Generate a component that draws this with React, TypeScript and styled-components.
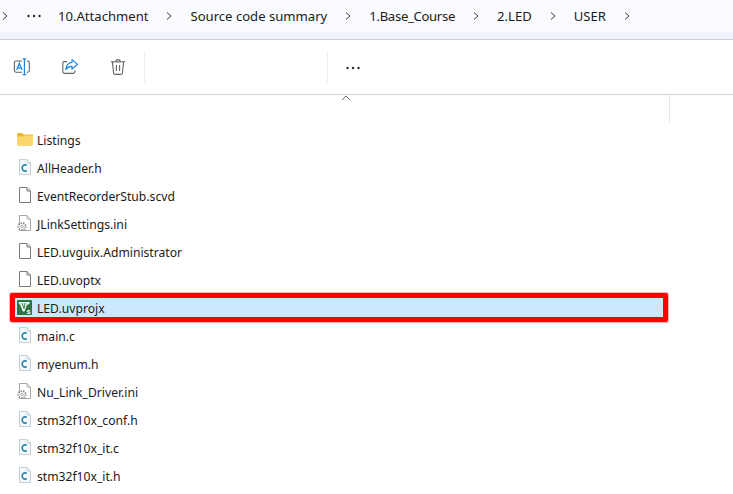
import { FC } from 'react';
import styled, { createGlobalStyle } from 'styled-components';

type Kind = 'folder' | 'c' | 'blank' | 'ini' | 'keil';

interface FileEntry {
  name: string;
  kind: Kind;
  selected?: boolean;
}

const crumbs = [
  { label: '10.Attachment' },
  { label: 'Source code summary' },
  { label: '1.Base_Course', tight: true },
  { label: '2.LED' },
  { label: 'USER' },
];

const files: FileEntry[] = [
  { name: 'Listings', kind: 'folder' },
  { name: 'AllHeader.h', kind: 'c' },
  { name: 'EventRecorderStub.scvd', kind: 'blank' },
  { name: 'JLinkSettings.ini', kind: 'ini' },
  { name: 'LED.uvguix.Administrator', kind: 'blank' },
  { name: 'LED.uvoptx', kind: 'blank' },
  { name: 'LED.uvprojx', kind: 'keil', selected: true },
  { name: 'main.c', kind: 'c' },
  { name: 'myenum.h', kind: 'c' },
  { name: 'Nu_Link_Driver.ini', kind: 'ini' },
  { name: 'stm32f10x_conf.h', kind: 'c' },
  { name: 'stm32f10x_it.c', kind: 'c' },
  { name: 'stm32f10x_it.h', kind: 'c' },
];

const Chevron = () => (
  <svg width="10" height="10" viewBox="0 0 10 10" fill="none" stroke="#3c3c3c" strokeWidth="1">
    <path d="M3 1.5 L7 5 L3 8.5" />
  </svg>
);

const Dots = () => (
  <svg width="16" height="4" viewBox="0 0 16 4" fill="#2b2b2b">
    <circle cx="2.5" cy="2" r="1.2" />
    <circle cx="8" cy="2" r="1.2" />
    <circle cx="13.5" cy="2" r="1.2" />
  </svg>
);

const RenameIcon = () => (
  <svg width="18" height="18" viewBox="0 0 18 18" fill="none">
    <path d="M9 3 H3 a1.6 1.6 0 0 0 -1.6 1.6 v8 a1.6 1.6 0 0 0 1.6 1.6 H9" stroke="#5f6368" strokeWidth="1.1" />
    <path d="M13.5 3 h1.2 a1.6 1.6 0 0 1 1.6 1.6 v8 a1.6 1.6 0 0 1 -1.6 1.6 h-1.2" stroke="#5f6368" strokeWidth="1.1" />
    <path d="M9.6 0.8 h3.6 M11.4 0.8 V16.6 M9.6 16.6 h3.6" stroke="#1a86e0" strokeWidth="1.2" />
    <path d="M3.6 12 L6.3 5.2 L9 12 M4.6 9.8 H8" stroke="#1a86e0" strokeWidth="1.2" />
  </svg>
);

const ShareIcon = () => (
  <svg width="18" height="18" viewBox="0 0 18 18" fill="none">
    <path d="M6 3.6 H3.4 a1.6 1.6 0 0 0 -1.6 1.6 v8.6 a1.6 1.6 0 0 0 1.6 1.6 h8.8 a1.6 1.6 0 0 0 1.6 -1.6 v-1.6" stroke="#5f6368" strokeWidth="1.1" />
    <path d="M11 1.6 L16.6 6.4 L11 11 V8.4 C8.4 8.4 6.4 9.2 4.8 11.4 C5.2 7.6 7.4 4.8 11 4.4 Z" stroke="#1a86e0" strokeWidth="1.2" strokeLinejoin="round" />
  </svg>
);

const TrashIcon = () => (
  <svg width="18" height="18" viewBox="0 0 18 18" fill="none" stroke="#5f6368" strokeWidth="1.1">
    <path d="M2 3.8 H16" />
    <path d="M6.8 3.6 C6.8 1 11.2 1 11.2 3.6" />
    <path d="M3.4 3.8 L4.6 15 a1.6 1.6 0 0 0 1.6 1.4 h5.6 a1.6 1.6 0 0 0 1.6 -1.4 L14.6 3.8" />
    <path d="M7.4 7 V13 M10.6 7 V13" />
  </svg>
);

const FileIcon: FC<{ kind: Kind }> = ({ kind }) => {
  if (kind === 'folder') {
    return (
      <svg width="18" height="18" viewBox="0 0 18 18">
        <path d="M2 3 a1 1 0 0 1 1 -1 h4 l1.6 1.6 H17 a1 1 0 0 1 1 1 v9 a1 1 0 0 1 -1 1 H3 a1 1 0 0 1 -1 -1 Z" fill="#f0b429" />
        <path d="M2 5.6 H8 L9.4 4.6 H17 a1 1 0 0 1 1 1 v8 a1 1 0 0 1 -1 1 H3 a1 1 0 0 1 -1 -1 Z" fill="#fcd770" />
      </svg>
    );
  }
  if (kind === 'keil') {
    return (
      <svg width="18" height="18" viewBox="0 0 18 18">
        <rect x="2" y="1" width="15" height="15" rx="1" fill="#2f7343" />
        <path d="M3.5 3 H15 L14 5.5 H12.1 L9.5 12.5 H7.7 L5.1 5.5 H4.3 Z" fill="#e9f3e4" />
        <path d="M7.1 4.1 L8.9 9.5 M9.9 4.1 L9.1 9.5" stroke="#2f7343" strokeWidth="0.9" fill="none" />
        <text x="11.5" y="14.9" fontSize="7.5" fontWeight="700" fontFamily="Liberation Sans, sans-serif" fill="#fff">s</text>
      </svg>
    );
  }
  const stroke = kind === 'c' ? '#c3d0d8' : kind === 'ini' ? '#a8a8a8' : '#7a7a7a';
  return (
    <svg width="18" height="18" viewBox="0 0 18 18" fill="none">
      <path d="M4.5 0.5 H12 L15.5 4 V15.5 H4.5 Z" fill={kind === 'c' ? '#f4f8fa' : '#fff'} stroke={stroke} />
      <path d="M12 0.5 V4 H15.5" stroke={stroke} />
      {kind === 'c' && (
        <path d="M11.6 6.6 C10.4 5.2 7.2 5.6 7.2 9 C7.2 12.4 10.4 12.8 11.6 11.4" stroke="#2b83ad" strokeWidth="1.7" />
      )}
      {kind === 'ini' && (
        <g>
          <circle cx="7" cy="11.5" r="3.6" fill="#fff" stroke="#8a8a8a" strokeWidth="1.8" strokeDasharray="1.5 1" />
          <circle cx="7" cy="11.5" r="1.2" fill="#fff" stroke="#8a8a8a" strokeWidth="0.8" />
        </g>
      )}
    </svg>
  );
};

const App: FC = () => (
  <Window>
    <GlobalStyle />
    <Breadcrumbs>
      <CrumbChevron>
        <Chevron />
      </CrumbChevron>
      <CrumbDots>
        <Dots />
      </CrumbDots>
      {crumbs.map((crumb) => (
        <Crumb key={crumb.label}>
          <CrumbLabel tight={crumb.tight}>{crumb.label}</CrumbLabel>
          <Chevron />
        </Crumb>
      ))}
    </Breadcrumbs>
    <Toolbar>
      <ToolButton>
        <RenameIcon />
      </ToolButton>
      <ToolButton>
        <ShareIcon />
      </ToolButton>
      <ToolButton>
        <TrashIcon />
      </ToolButton>
      <Separator />
      <ToolSpacer />
      <Separator />
      <MoreButton>
        <Dots />
      </MoreButton>
    </Toolbar>
    <ColumnHeader>
      <SortCaret width="10" height="6" viewBox="0 0 10 6" fill="none" stroke="#6a6a6a">
        <path d="M1 5 L5 1 L9 5" />
      </SortCaret>
    </ColumnHeader>
    <FileList>
      {files.map((file) => (
        <Row key={file.name} selected={file.selected}>
          <IconSlot>
            <FileIcon kind={file.kind} />
          </IconSlot>
          <FileName>{file.name}</FileName>
        </Row>
      ))}
    </FileList>
  </Window>
);

const GlobalStyle = createGlobalStyle`
  html, body {
    margin: 0;
    padding: 0;
    background: #fff;
  }
  body {
    font-family: "Noto Sans", "Open Sans", sans-serif;
    overflow: hidden;
  }
`;

const Window = styled.div`
  width: 733px;
  height: 494px;
  overflow: hidden;
  background: #fff;
`;

const Breadcrumbs = styled.div`
  height: 32px;
  display: flex;
  align-items: center;
  background: #f9fbfe;
  border-bottom: 7px solid #f0f4f9;
  box-shadow: 0 1px 0 #c8d3de;
  color: #1c1c1c;
  font-size: 13.1px;
`;

const CrumbChevron = styled.div`
  width: 10px;
  display: flex;
`;

const CrumbDots = styled.div`
  width: 48px;
  display: flex;
  justify-content: center;
`;

const Crumb = styled.div`
  display: flex;
  align-items: center;
  gap: 16px;
  margin-right: 16px;
  white-space: nowrap;
`;

const CrumbLabel = styled.span<{ tight?: boolean }>`
  letter-spacing: ${({ tight }) => (tight ? '-0.3px' : '0')};
`;

const Toolbar = styled.div`
  margin-top: 1px;
  height: 54px;
  display: flex;
  align-items: center;
  gap: 4px;
  border-bottom: 1px solid #c8d3de;
`;

const ToolButton = styled.div`
  width: 44px;
  height: 32px;
  display: flex;
  align-items: center;
  justify-content: center;
`;

const MoreButton = styled(ToolButton)`
  margin-left: -1px;
  padding-top: 2px;
`;

const Separator = styled.div`
  width: 1px;
  height: 31px;
  background: #ececec;
`;

const ToolSpacer = styled.div`
  width: 174px;
`;

const ColumnHeader = styled.div`
  position: relative;
  height: 27px;
  width: 670px;
  box-sizing: border-box;
  border-right: 1px solid #e5e5e5;
`;

const SortCaret = styled.svg`
  position: absolute;
  left: 341px;
  top: 0;
`;

const FileList = styled.div`
  display: flex;
  flex-direction: column;
  padding: 4px 65px 0 10px;
`;

const Row = styled.div<{ selected?: boolean }>`
  position: relative;
  height: 28px;
  display: flex;
  align-items: center;
  padding-left: 5px;
  gap: 4px;

  &::after {
    content: '';
    display: ${({ selected }) => (selected ? 'block' : 'none')};
    position: absolute;
    left: 0;
    right: 0;
    top: -1px;
    height: 29px;
    box-sizing: border-box;
    border: 5px solid #ff0000;
    border-radius: 2px;
    background: #cce8ff;
    box-shadow: 0 0 0 1px rgba(255, 90, 90, 0.45);
  }
`;

const IconSlot = styled.div`
  position: relative;
  z-index: 1;
  width: 18px;
  height: 18px;
  display: flex;
`;

const FileName = styled.span`
  position: relative;
  z-index: 1;
  font-size: 12.15px;
  color: #1a1a1a;
  white-space: nowrap;
`;

export default App;
